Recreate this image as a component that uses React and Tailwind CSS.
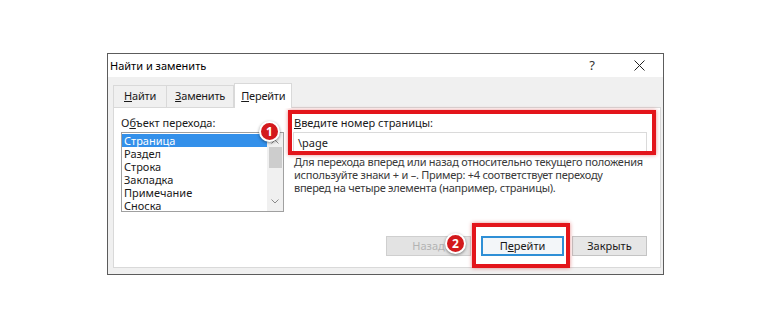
import React from "react"

const items = ["Страница", "Раздел", "Строка", "Закладка", "Примечание", "Сноска"]

function Badge({ n, className }) {
  return (
    <div
      className={
        "absolute flex h-[21px] w-[21px] items-center justify-center rounded-full border-2 border-white bg-[#d3191c] text-[12px] font-bold leading-none text-white shadow-[0_1px_3px_rgba(0,0,0,0.45)] " +
        className
      }
    >
      {n}
    </div>
  )
}

function RedBox({ className }) {
  return (
    <div
      className={
        "pointer-events-none absolute border-4 border-[#e3151b] shadow-[0_0_4px_rgba(200,0,0,0.45)] " +
        className
      }
    />
  )
}

function Tab({ children, active }) {
  if (active) {
    return (
      <div className="relative z-10 -mb-px flex h-[25px] items-center border border-b-0 border-[#d9d9d9] bg-white px-[6px]">
        {children}
      </div>
    )
  }
  return (
    <div className="flex h-[22px] items-center border border-b-0 border-l-0 border-[#d9d9d9] bg-[#f0f0f0] px-[8px] first:border-l first:px-[10px]">
      {children}
    </div>
  )
}

function ListBox() {
  return (
    <div className="relative flex h-[80px] w-[163px] border border-[#a0a0a0] bg-white">
      <div className="flex-1 pt-[1px]">
        {items.map((it, i) => (
          <div
            key={it}
            className={
              "h-[13px] pl-[2px] text-[11px] leading-[13px] " +
              (i === 0 ? "bg-[#3390ea] text-white" : "text-[#1a1a1a]")
            }
          >
            {it}
          </div>
        ))}
      </div>
      <div className="flex w-[16px] flex-col items-center bg-[#f0f0f0]">
        <svg width="8" height="5" viewBox="0 0 8 5" className="mt-[6px]">
          <path d="M0.5 4.5 L4 1 L7.5 4.5" fill="none" stroke="#8a8a8a" strokeWidth="1" />
        </svg>
        <div className="mt-[3px] h-[21px] w-[13px] bg-[#cdcdcd]" />
        <div className="flex-1" />
        <svg width="8" height="5" viewBox="0 0 8 5" className="mb-[7px]">
          <path d="M0.5 0.5 L4 4 L7.5 0.5" fill="none" stroke="#8a8a8a" strokeWidth="1" />
        </svg>
      </div>
    </div>
  )
}

export default function App() {
  return (
    <div className="relative h-[330px] w-[770px] bg-white pl-[107px] pt-[53px] font-['Noto_Sans',sans-serif] text-[11px] text-[#1a1a1a]">
      <div className="flex h-[222px] w-[557px] flex-col border border-[#5c5c5c] bg-[#f0f0f0]">
        {/* title bar */}
        <div className="flex h-[23px] items-center bg-white pl-[2px]">
          <span className="text-[11px] leading-none text-black">Найти и заменить</span>
          <span className="ml-auto mr-[39px] text-[13px] leading-none text-[#333]">?</span>
          <svg width="11" height="11" viewBox="0 0 11 11" className="mr-[18px]">
            <path d="M0.5 0.5 L10.5 10.5 M10.5 0.5 L0.5 10.5" stroke="#222" strokeWidth="1" />
          </svg>
        </div>

        {/* tabs */}
        <div className="mt-[6px] flex items-end pl-[5px] tracking-[-0.2px]">
          <Tab>
            <span>
              <u>Н</u>айти
            </span>
          </Tab>
          <Tab>
            <span>
              <u>З</u>аменить
            </span>
          </Tab>
          <Tab active>
            <span>
              <u>П</u>ерейти
            </span>
          </Tab>
        </div>

        {/* panel */}
        <div className="mb-[6px] ml-[5px] mr-[2px] flex flex-1 flex-col border border-[#d9d9d9] bg-white pb-[11px] pl-[7px] pr-[13px] pt-[8px]">
          <div className="flex">
            <div className="flex flex-col">
              <div className="h-[13px] leading-[13px]">
                О<u>б</u>ъект перехода:
              </div>
              <div className="mt-[3px]">
                <ListBox />
              </div>
            </div>
            <div className="ml-[9px] flex flex-1 flex-col">
              <div className="h-[13px] pl-[1px] leading-[13px]">
                <u>В</u>ведите номер страницы:
              </div>
              <div className="mt-[3px] flex h-[20px] w-[354px] items-center border border-[#dadada] bg-white pl-[4px] leading-none">
                \page
              </div>
              <div className="mt-[3px] whitespace-nowrap pl-[1px] text-[11px] leading-[13px] tracking-[-0.25px] text-[#3a3a3a]">
                Для перехода вперед или назад относительно текущего положения
                <br />
                используйте знаки + и –. Пример: +4 соответствует переходу
                <br />
                вперед на четыре элемента (например, страницы).
              </div>
            </div>
          </div>

          <div className="mt-auto flex justify-end">
            <div className="flex h-[20px] w-[85px] items-center justify-center border border-[#cfcfcf] bg-[#e3e3e3] text-[#b3b3b3]">
              Назад
            </div>
            <div className="ml-[10px] flex h-[20px] w-[83px] items-center justify-center border-2 border-[#2e8fd6] bg-[#f3f6f9]">
              <span>
                П<u>е</u>рейти
              </span>
            </div>
            <div className="ml-[8px] flex h-[20px] w-[75px] items-center justify-center border border-[#c4c4c4] bg-[#e6e6e6]">
              Закрыть
            </div>
          </div>
        </div>
      </div>

      <RedBox className="left-[288px] top-[110px] h-[45px] w-[368px]" />
      <RedBox className="left-[472px] top-[223px] h-[45px] w-[98px]" />
      <Badge n="1" className="left-[259px] top-[121px]" />
      <Badge n="2" className="left-[445px] top-[233px]" />
    </div>
  )
}
